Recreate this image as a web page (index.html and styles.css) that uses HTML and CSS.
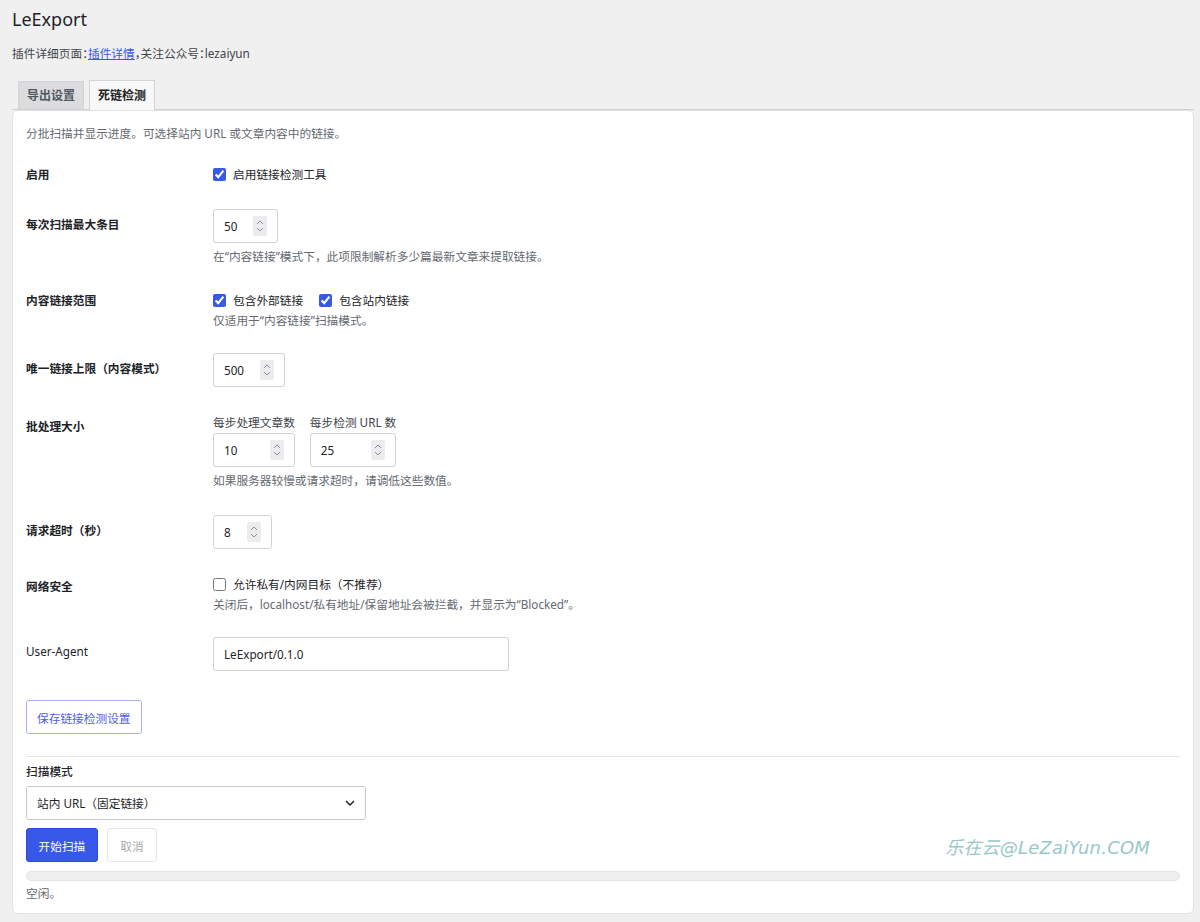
FILE: index.html
```html
<!DOCTYPE html>
<html lang="zh-CN">
<head>
<meta charset="utf-8">
<title>LeExport</title>
<link rel="stylesheet" href="styles.css">
</head>
<body>
<div class="wrap">
  <h1 class="title">LeExport</h1>
  <p class="intro">插件详细页面：<a href="#" class="link">插件详情</a>，关注公众号：lezaiyun</p>

  <nav class="tabs">
    <a href="#" class="tab">导出设置</a>
    <a href="#" class="tab tab-active">死链检测</a>
  </nav>

  <section class="card">
    <p class="lead">分批扫描并显示进度。可选择站内 URL 或文章内容中的链接。</p>

    <div class="row row-cb">
      <div class="label">启用</div>
      <div class="field">
        <label class="check"><input type="checkbox" checked><span>启用链接检测工具</span></label>
      </div>
    </div>

    <div class="row">
      <div class="label">每次扫描最大条目</div>
      <div class="field">
        <div class="num num-50"><span class="val">50</span><span class="spin"><svg width="8" height="14" viewBox="0 0 8 14"><path d="M1 5 L4 2 L7 5" fill="none" stroke="#8a8d91" stroke-width="1"/><path d="M1 9 L4 12 L7 9" fill="none" stroke="#8a8d91" stroke-width="1"/></svg></span></div>
        <p class="desc">在“内容链接”模式下，此项限制解析多少篇最新文章来提取链接。</p>
      </div>
    </div>

    <div class="row row-cb row-cbdesc">
      <div class="label">内容链接范围</div>
      <div class="field">
        <div class="checks">
          <label class="check"><input type="checkbox" checked><span>包含外部链接</span></label>
          <label class="check"><input type="checkbox" checked><span>包含站内链接</span></label>
        </div>
        <p class="desc desc-cb">仅适用于“内容链接”扫描模式。</p>
      </div>
    </div>

    <div class="row">
      <div class="label">唯一链接上限（内容模式）</div>
      <div class="field">
        <div class="num num-500"><span class="val">500</span><span class="spin"><svg width="8" height="14" viewBox="0 0 8 14"><path d="M1 5 L4 2 L7 5" fill="none" stroke="#8a8d91" stroke-width="1"/><path d="M1 9 L4 12 L7 9" fill="none" stroke="#8a8d91" stroke-width="1"/></svg></span></div>
      </div>
    </div>

    <div class="row row-batch">
      <div class="label">批处理大小</div>
      <div class="field">
        <div class="batch">
          <div class="batch-col">
            <div class="sublabel">每步处理文章数</div>
            <div class="num num-full"><span class="val">10</span><span class="spin"><svg width="8" height="14" viewBox="0 0 8 14"><path d="M1 5 L4 2 L7 5" fill="none" stroke="#8a8d91" stroke-width="1"/><path d="M1 9 L4 12 L7 9" fill="none" stroke="#8a8d91" stroke-width="1"/></svg></span></div>
          </div>
          <div class="batch-col">
            <div class="sublabel">每步检测 URL 数</div>
            <div class="num num-full"><span class="val">25</span><span class="spin"><svg width="8" height="14" viewBox="0 0 8 14"><path d="M1 5 L4 2 L7 5" fill="none" stroke="#8a8d91" stroke-width="1"/><path d="M1 9 L4 12 L7 9" fill="none" stroke="#8a8d91" stroke-width="1"/></svg></span></div>
          </div>
        </div>
        <p class="desc">如果服务器较慢或请求超时，请调低这些数值。</p>
      </div>
    </div>

    <div class="row">
      <div class="label">请求超时（秒）</div>
      <div class="field">
        <div class="num num-8"><span class="val">8</span><span class="spin"><svg width="8" height="14" viewBox="0 0 8 14"><path d="M1 5 L4 2 L7 5" fill="none" stroke="#8a8d91" stroke-width="1"/><path d="M1 9 L4 12 L7 9" fill="none" stroke="#8a8d91" stroke-width="1"/></svg></span></div>
      </div>
    </div>

    <div class="row row-cb row-net row-cbdesc">
      <div class="label">网络安全</div>
      <div class="field">
        <label class="check"><input type="checkbox"><span>允许私有/内网目标（不推荐）</span></label>
        <p class="desc desc-cb">关闭后，localhost/私有地址/保留地址会被拦截，并显示为“Blocked”。</p>
      </div>
    </div>

    <div class="row">
      <div class="label label-plain">User-Agent</div>
      <div class="field">
        <div class="text-input">LeExport/0.1.0</div>
      </div>
    </div>

    <div class="actions">
      <button class="btn btn-save" type="button">保存链接检测设置</button>
    </div>

    <hr class="sep">

    <div class="scan">
      <div class="scan-label">扫描模式</div>
      <div class="select">
        <span>站内 URL（固定链接）</span>
        <svg width="10" height="6" viewBox="0 0 10 6"><path d="M1 1 L5 5 L9 1" fill="none" stroke="#1d2327" stroke-width="1.5"/></svg>
      </div>
      <div class="scan-buttons">
        <button class="btn btn-primary" type="button">开始扫描</button>
        <button class="btn btn-cancel" type="button">取消</button>
      </div>
      <div class="progress"></div>
      <p class="status">空闲。</p>
    </div>

    <div class="watermark">乐在云@LeZaiYun.COM</div>
  </section>
</div>
</body>
</html>
```

FILE: styles.css
```css
* { box-sizing: border-box; }

html, body {
  margin: 0;
  padding: 0;
  background: #f0f0f0;
}

body {
  font-family: "Noto Sans", "Noto Sans CJK SC", sans-serif;
  font-size: 11.7px;
  line-height: 18px;
  color: #1d2327;
}

.wrap {
  padding: 0 6px 8px 12px;
}

.title {
  margin: 5px 0 0;
  font-size: 18px;
  line-height: 28px;
  font-weight: 400;
  color: #1d2327;
}

.intro {
  margin: 11px 0 0;
  color: #3c434a;
  font-size: 11.7px;
  font-feature-settings: "halt";
}

.link {
  color: #3858e9;
  text-decoration: underline;
}

.tabs {
  display: flex;
  align-items: flex-end;
  gap: 5px;
  margin-top: 18px;
  padding-left: 6px;
  border-bottom: 1px solid #d0d0d2;
}

.tab {
  display: block;
  padding: 0 8px;
  line-height: 27px;
  border: 1px solid #d4d4d6;
  border-bottom: none;
  background: #dcdcde;
  color: #50575e;
  font-weight: 700;
  text-decoration: none;
  font-size: 12px;
}

.tab-active {
  line-height: 29px;
  margin-bottom: -1px;
  background: #f8f8f8;
  color: #1d2327;
  position: relative;
}

.card {
  position: relative;
  background: #fff;
  border: 1px solid #e2e2e2;
  border-radius: 6px;
  padding: 13px 13px 11px;
}

.lead {
  margin: 0 0 11px;
  color: #646970;
}

.row {
  display: grid;
  grid-template-columns: 187px 1fr;
  padding: 13px 0;
}

.row:first-of-type {
  padding-top: 12px;
}

.row-cbdesc {
  padding-bottom: 11px;
}

.row-cbdesc + .row {
  padding-bottom: 15px;
}

.label {
  font-weight: 700;
  padding-top: 6px;
  color: #1d2327;
}

.label-plain {
  font-weight: 400;
  padding-top: 5px;
}

.row-cb .label {
  padding-top: 0;
}

.row-net .label {
  padding-top: 2px;
}

.row-batch .label {
  padding-top: 2px;
}

.field {
  min-width: 0;
}

.check {
  display: flex;
  align-items: center;
  height: 18px;
  gap: 7px;
  color: #1d2327;
}

.check input {
  margin: 0;
  width: 13px;
  height: 13px;
  accent-color: #3858e9;
}

.checks {
  display: flex;
  gap: 16px;
}

.desc {
  margin: 4px 0 0;
  color: #646970;
}

.desc-cb {
  margin-top: 2px;
}

.num {
  display: flex;
  align-items: center;
  height: 34px;
  padding: 0 10px;
  border: 1px solid #d2d3d5;
  border-radius: 3px;
  background: #fff;
}

.num .val {
  flex: 1;
}

.spin {
  display: flex;
  align-items: center;
  justify-content: center;
  width: 14px;
  height: 20px;
  background: #ececee;
  border-radius: 2px;
}

.num-50 { width: 65px; }
.num-500 { width: 72px; }
.num-8 { width: 59px; }
.num-full { width: 100%; }

.batch {
  display: flex;
  gap: 15px;
}

.batch-col {
  display: flex;
  flex-direction: column;
}

.sublabel {
  color: #3c434a;
  line-height: 14px;
  margin-bottom: 4px;
  white-space: nowrap;
}

.text-input {
  width: 296px;
  height: 34px;
  padding: 0 10px;
  line-height: 32px;
  border: 1px solid #d2d3d5;
  border-radius: 3px;
}

.actions {
  padding-top: 14px;
}

.btn {
  height: 34px;
  font-family: inherit;
  font-size: 11.7px;
  border-radius: 3px;
  cursor: pointer;
}

.btn-save {
  padding: 0 10px;
  background: #fff;
  border: 1px solid #a9b3f2;
  color: #4f5ef0;
}

.sep {
  margin: 22px 0 0;
  border: none;
  border-top: 1px solid #e6e6e6;
}

.scan-label {
  margin-top: 5px;
  font-weight: 500;
}

.select {
  display: flex;
  align-items: center;
  justify-content: space-between;
  width: 340px;
  height: 34px;
  margin-top: 6px;
  padding: 0 10px 0 10px;
  border: 1px solid #c9cacc;
  border-radius: 3px;
}

.scan-buttons {
  display: flex;
  gap: 9px;
  margin-top: 8px;
}

.btn-primary {
  padding: 0 11.5px;
  background: #3858e9;
  border: 1px solid #2c4ad8;
  color: #fff;
}

.btn-cancel {
  padding: 0 12.5px;
  background: #fff;
  border: 1px solid #e6e6e6;
  color: #a7aaad;
}

.progress {
  margin-top: 9px;
  height: 10px;
  background: #efefef;
  border: 1px solid #e4e4e4;
  border-radius: 5px;
}

.status {
  margin: 3px 0 0;
  color: #646970;
}

.watermark {
  position: absolute;
  right: 43px;
  bottom: 53px;
  font-family: "DejaVu Sans", "Noto Sans CJK SC", sans-serif;
  font-style: italic;
  font-size: 18px;
  line-height: 24px;
  letter-spacing: 0.2px;
  color: #98c8c8;
}
```
